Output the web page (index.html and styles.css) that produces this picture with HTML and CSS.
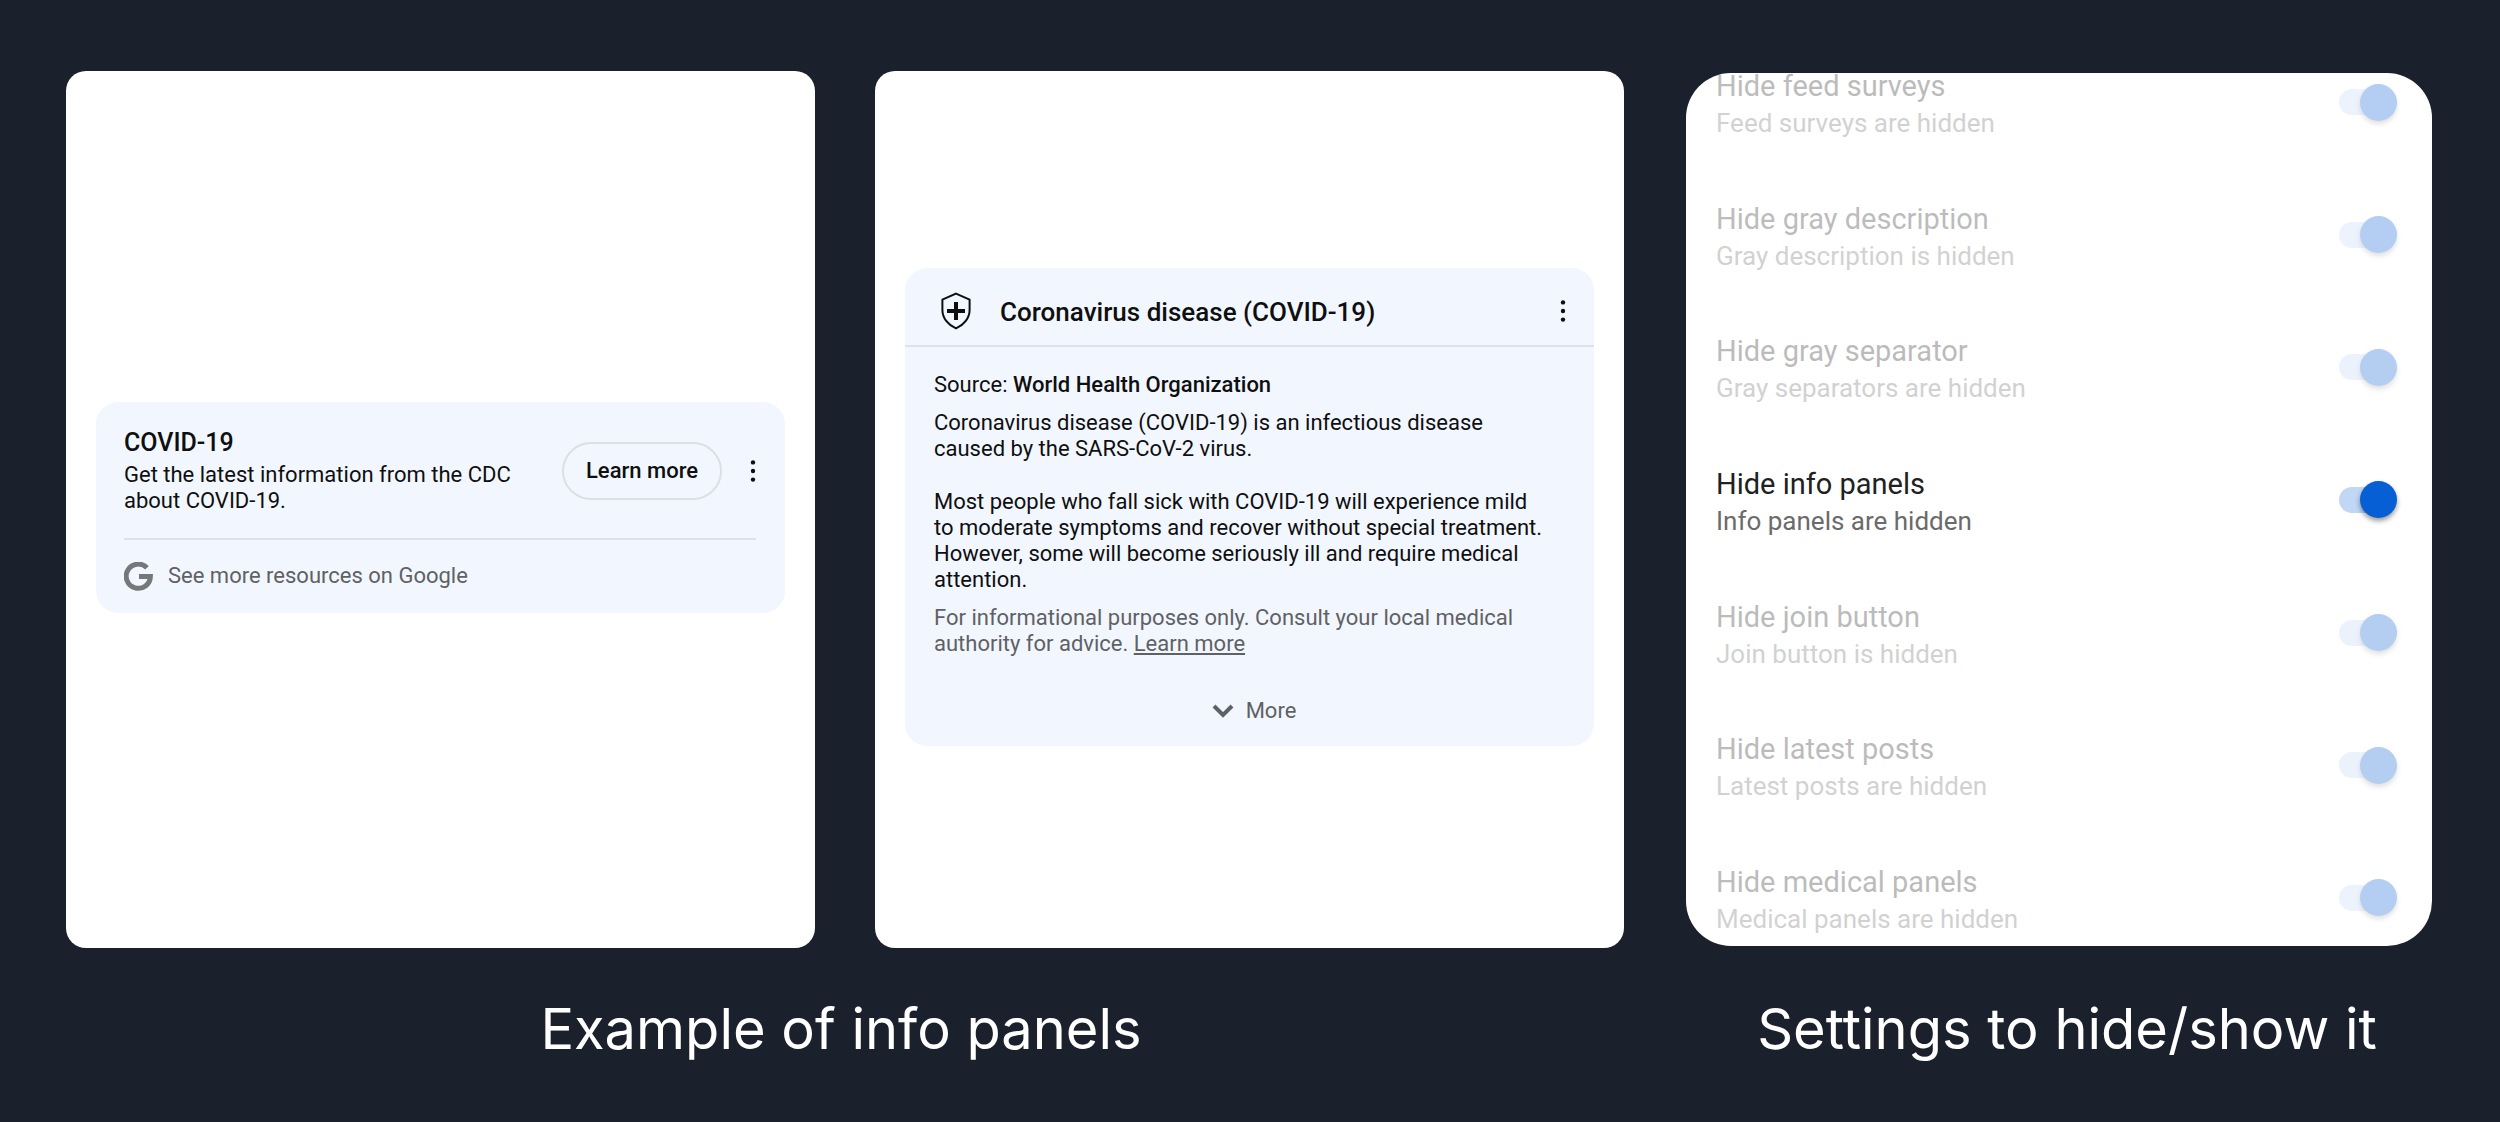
FILE: index.html
```html
<!DOCTYPE html>
<html lang="en">
<head>
<meta charset="utf-8">
<meta name="viewport" content="width=device-width, initial-scale=1">
<title>Hide info panels</title>
<link rel="stylesheet" href="styles.css">
</head>
<body>
<main class="board">
  <section class="group">
    <div class="screens">
      <div class="screen">
        <article class="card">
          <div class="notice">
            <div class="notice-text">
              <h2 class="title">COVID-19</h2>
              <p>Get the latest information from the CDC about COVID-19.</p>
            </div>
            <button class="pill" type="button">Learn more</button>
            <button class="dots" type="button" aria-label="More options">
              <svg width="6" height="22" viewBox="0 0 6 22"><circle cx="3" cy="2.4" r="2.2"/><circle cx="3" cy="11" r="2.2"/><circle cx="3" cy="19.6" r="2.2"/></svg>
            </button>
          </div>
          <a class="resources" href="#">
            <svg width="29" height="29" viewBox="0 0 29 29" aria-hidden="true"><path d="M23 5.8A12.1 12.1 0 1 0 26.4 14.4H15" fill="none" stroke="#757779" stroke-width="5"/></svg>
            <span>See more resources on Google</span>
          </a>
        </article>
      </div>
      <div class="screen">
        <article class="card">
          <header class="card-head">
            <svg width="30" height="38" viewBox="0 0 30 38" aria-hidden="true"><path d="M15 1.6 28.6 7.600V18C28.6 26 23 33 15 36.400C7 33 1.400 26 1.400 18V7.600Z" fill="none" stroke="#0f0f0f" stroke-width="2"/><path d="M15 10V28M6 19H24" stroke="#0f0f0f" stroke-width="4"/></svg>
            <h2 class="title">Coronavirus disease (COVID-19)</h2>
            <button class="dots" type="button" aria-label="More options">
              <svg width="6" height="22" viewBox="0 0 6 22"><circle cx="3" cy="2.4" r="2.2"/><circle cx="3" cy="11" r="2.2"/><circle cx="3" cy="19.6" r="2.2"/></svg>
            </button>
          </header>
          <div class="card-body">
            <p>Source: <strong>World Health Organization</strong></p>
            <p>Coronavirus disease (COVID-19) is an infectious disease caused by the SARS-CoV-2 virus.</p>
            <p class="spaced">Most people who fall sick with COVID-19 will experience mild to moderate symptoms and recover without special treatment. However, some will become seriously ill and require medical attention.</p>
            <p class="muted">For informational purposes only. Consult your local medical authority for advice. <a href="#">Learn more</a></p>
            <button class="more" type="button">
              <svg width="22" height="14" viewBox="0 0 22 14" aria-hidden="true"><path d="M2 2 11 11 20 2" fill="none" stroke="#606163" stroke-width="4"/></svg>
              More
            </button>
          </div>
        </article>
      </div>
    </div>
    <h1 class="caption">Example of info panels</h1>
  </section>

  <section class="group">
    <div class="settings">
      <div class="list">
        <label class="row dim"><span class="label">Hide feed surveys<small>Feed surveys are hidden</small></span><input class="switch" type="checkbox" checked></label>
        <label class="row dim"><span class="label">Hide gray description<small>Gray description is hidden</small></span><input class="switch" type="checkbox" checked></label>
        <label class="row dim"><span class="label">Hide gray separator<small>Gray separators are hidden</small></span><input class="switch" type="checkbox" checked></label>
        <label class="row"><span class="label">Hide info panels<small>Info panels are hidden</small></span><input class="switch" type="checkbox" checked></label>
        <label class="row dim"><span class="label">Hide join button<small>Join button is hidden</small></span><input class="switch" type="checkbox" checked></label>
        <label class="row dim"><span class="label">Hide latest posts<small>Latest posts are hidden</small></span><input class="switch" type="checkbox" checked></label>
        <label class="row dim"><span class="label">Hide medical panels<small>Medical panels are hidden</small></span><input class="switch" type="checkbox" checked></label>
      </div>
    </div>
    <h1 class="caption caption-settings">Settings to hide/show it</h1>
  </section>
</main>
</body>
</html>
```
FILE: styles.css
```css
* { box-sizing: border-box; margin: 0; padding: 0; }

body {
  background: #1b202d;
  font: 22px/26px Roboto, "Liberation Sans", sans-serif;
  color: #0f0f0f;
}

button {
  font: inherit;
  color: inherit;
  background: none;
  border: 0;
  cursor: pointer;
}

svg { display: block; flex: none; }

.board {
  display: grid;
  grid-template-columns: 1558fr 746fr;
  gap: 62px;
  min-height: 100vh;
  padding: 71px 68px 0 66px;
}

.group { display: flex; flex-direction: column; gap: 26px; }

.screens {
  display: grid;
  grid-template-columns: 1fr 1fr;
  gap: 60px;
  min-height: 877px;
}

.screen {
  display: flex;
  flex-direction: column;
  justify-content: center;
  padding: 0 30px 5px;
  background: #fff;
  border-radius: 20px;
}

.card { background: #f2f7ff; border-radius: 22px; }

.title { font-size: 25px; line-height: 30px; font-weight: 500; }

.notice {
  display: flex;
  align-items: center;
  margin: 0 29px 0 28px;
  padding: 26px 0 24px;
  border-bottom: 2px solid #dde1ea;
}

.notice-text {
  display: flex;
  flex-direction: column;
  flex: 1;
  gap: 4px;
  padding-right: 40px;
}

.pill {
  width: 160px;
  height: 58px;
  margin-right: 28px;
  border: 2px solid #dcdfe4;
  border-radius: 29px;
  font-weight: 500;
}

.dots { fill: #0f0f0f; }

.resources {
  display: flex;
  align-items: center;
  gap: 15px;
  padding: 22px 28px;
  color: #606163;
  text-decoration: none;
}

.card-head {
  display: flex;
  align-items: center;
  gap: 29px;
  height: 79px;
  padding: 8px 28px 0 36px;
  border-bottom: 2px solid #dde1ea;
}

.card-head .title { flex: 1; padding-top: 2px; font-size: 26px; }

.card-body {
  display: flex;
  flex-direction: column;
  gap: 12px;
  padding: 25px 28px 22px 29px;
}

.card-body p { padding-right: 20px; }
.card-body strong { font-weight: 500; }
.card-body .spaced { margin-top: 15px; }
.muted, .muted a { color: #606163; }

.more {
  display: flex;
  align-items: center;
  align-self: center;
  gap: 12px;
  margin-top: 29px;
  padding-left: 8px;
  color: #606163;
}

.settings {
  height: 873px;
  margin: 2px 0;
  overflow: hidden;
  background: #fff;
  border-radius: 45px;
}

.list {
  display: grid;
  grid-auto-rows: 1fr;
  height: 928px;
  margin-top: -37px;
}

.row {
  display: flex;
  align-items: center;
  justify-content: space-between;
  padding: 0 35px 0 30px;
  font-size: 29px;
  line-height: 36px;
  color: #212121;
}

.label { padding-top: 6px; }
.row small { display: block; font-size: 26px; line-height: 38px; color: #6b6b6b; }
.row.dim { opacity: 0.3; }

.switch {
  display: grid;
  align-items: center;
  width: 58px;
  height: 37px;
  appearance: none;
}

.switch::before, .switch::after { content: ""; grid-area: 1 / 1; }

.switch::before {
  width: 52px;
  height: 26px;
  border-radius: 13px;
  background: #c0d7f5;
}

.switch::after {
  justify-self: end;
  width: 37px;
  height: 37px;
  border-radius: 50%;
  background: #065fd4;
  box-shadow: 0 3px 5px rgba(0, 0, 0, 0.4);
}

.caption {
  padding-right: 8px;
  font: 400 56px/110px Inter, "Liberation Sans", sans-serif;
  text-align: center;
  color: #fff;
}

.caption-settings { padding: 0 0 0 16px; }
```
